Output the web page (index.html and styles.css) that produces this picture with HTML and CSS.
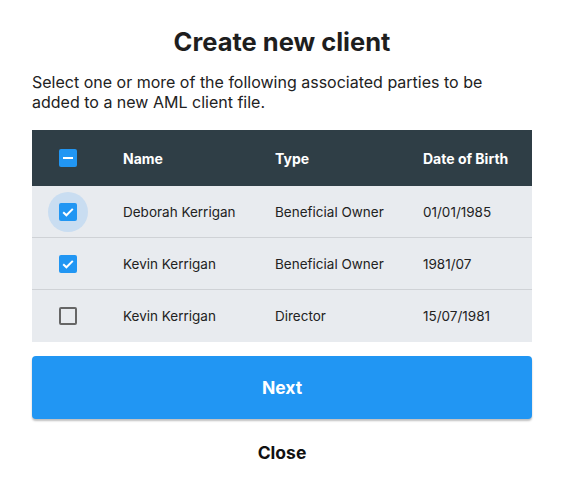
FILE: index.html
```html
<!DOCTYPE html>
<html>
<head>
<meta charset="utf-8">
<link rel="stylesheet" href="styles.css">
</head>
<body>
<div class="dialog">
  <h1 class="title">Create new client</h1>
  <p class="intro">Select one or more of the following associated parties to be added to a new AML client file.</p>
  <div class="table">
    <div class="row head">
      <div class="cell check"><span class="box indeterminate"><svg viewBox="0 0 18 18" width="18" height="18"><rect x="4" y="8" width="10" height="2" fill="#fff"/></svg></span></div>
      <div class="cell">Name</div>
      <div class="cell">Type</div>
      <div class="cell">Date of Birth</div>
    </div>
    <div class="row">
      <div class="cell check"><span class="halo"></span><span class="box checked"><svg viewBox="0 0 18 18" width="18" height="18"><path d="M4.2 9.2 L7.4 12.3 L13.8 5.9" fill="none" stroke="#fff" stroke-width="2"/></svg></span></div>
      <div class="cell">Deborah Kerrigan</div>
      <div class="cell">Beneficial Owner</div>
      <div class="cell">01/01/1985</div>
    </div>
    <div class="row">
      <div class="cell check"><span class="box checked"><svg viewBox="0 0 18 18" width="18" height="18"><path d="M4.2 9.2 L7.4 12.3 L13.8 5.9" fill="none" stroke="#fff" stroke-width="2"/></svg></span></div>
      <div class="cell">Kevin Kerrigan</div>
      <div class="cell">Beneficial Owner</div>
      <div class="cell">1981/07</div>
    </div>
    <div class="row last">
      <div class="cell check"><span class="box empty"></span></div>
      <div class="cell">Kevin Kerrigan</div>
      <div class="cell">Director</div>
      <div class="cell">15/07/1981</div>
    </div>
  </div>
  <button class="next">Next</button>
  <button class="close">Close</button>
</div>
</body>
</html>
```
FILE: styles.css
```css
* { box-sizing: border-box; }
body {
  margin: 0;
  background: #fff;
  font-family: Inter, "Noto Sans", sans-serif;
  color: #1f1f1f;
}
.dialog {
  width: 500px;
  margin-left: 32px;
  padding-top: 26px;
  display: flex;
  flex-direction: column;
}
.title {
  margin: 0;
  text-align: center;
  font-size: 25.5px;
  font-weight: 700;
  line-height: 32px;
  color: #1e1e1e;
}
.intro {
  margin: 14px 0 18px;
  font-size: 16px;
  line-height: 20px;
  color: #222;
}
.table {
  display: flex;
  flex-direction: column;
  background: #e8ebef;
}
.row {
  display: grid;
  grid-template-columns: 91px 152px 148px 1fr;
  height: 52px;
  align-items: center;
  font-size: 13.5px;
  color: #222;
  border-bottom: 1px solid #cfd2d6;
}
.row.last { border-bottom: none; }
.row.head {
  height: 56px;
  background: #2f3e46;
  color: #fff;
  font-size: 14px;
  font-weight: 700;
  border-bottom: none;
}
.cell.check {
  position: relative;
  display: flex;
  align-items: center;
  padding-left: 27px;
  height: 100%;
}
.box {
  position: relative;
  width: 18px;
  height: 18px;
  border-radius: 2px;
  display: block;
}
.box svg { display: block; }
.checked, .indeterminate { background: #2196f3; }
.empty { border: 2px solid #666; }
.halo {
  position: absolute;
  left: 16px;
  top: 50%;
  width: 40px;
  height: 40px;
  margin-top: -20px;
  border-radius: 50%;
  background: #c9ddf1;
}
.next {
  margin-top: 14px;
  height: 63px;
  border: none;
  border-radius: 4px;
  background: #2196f3;
  color: #fff;
  font-family: inherit;
  font-size: 17.5px;
  font-weight: 700;
  box-shadow: 0 2px 2px rgba(0,0,0,0.25);
}
.close {
  margin-top: 15px;
  height: 36px;
  border: none;
  background: transparent;
  font-family: inherit;
  font-size: 17.5px;
  font-weight: 700;
  color: #111;
}
```
